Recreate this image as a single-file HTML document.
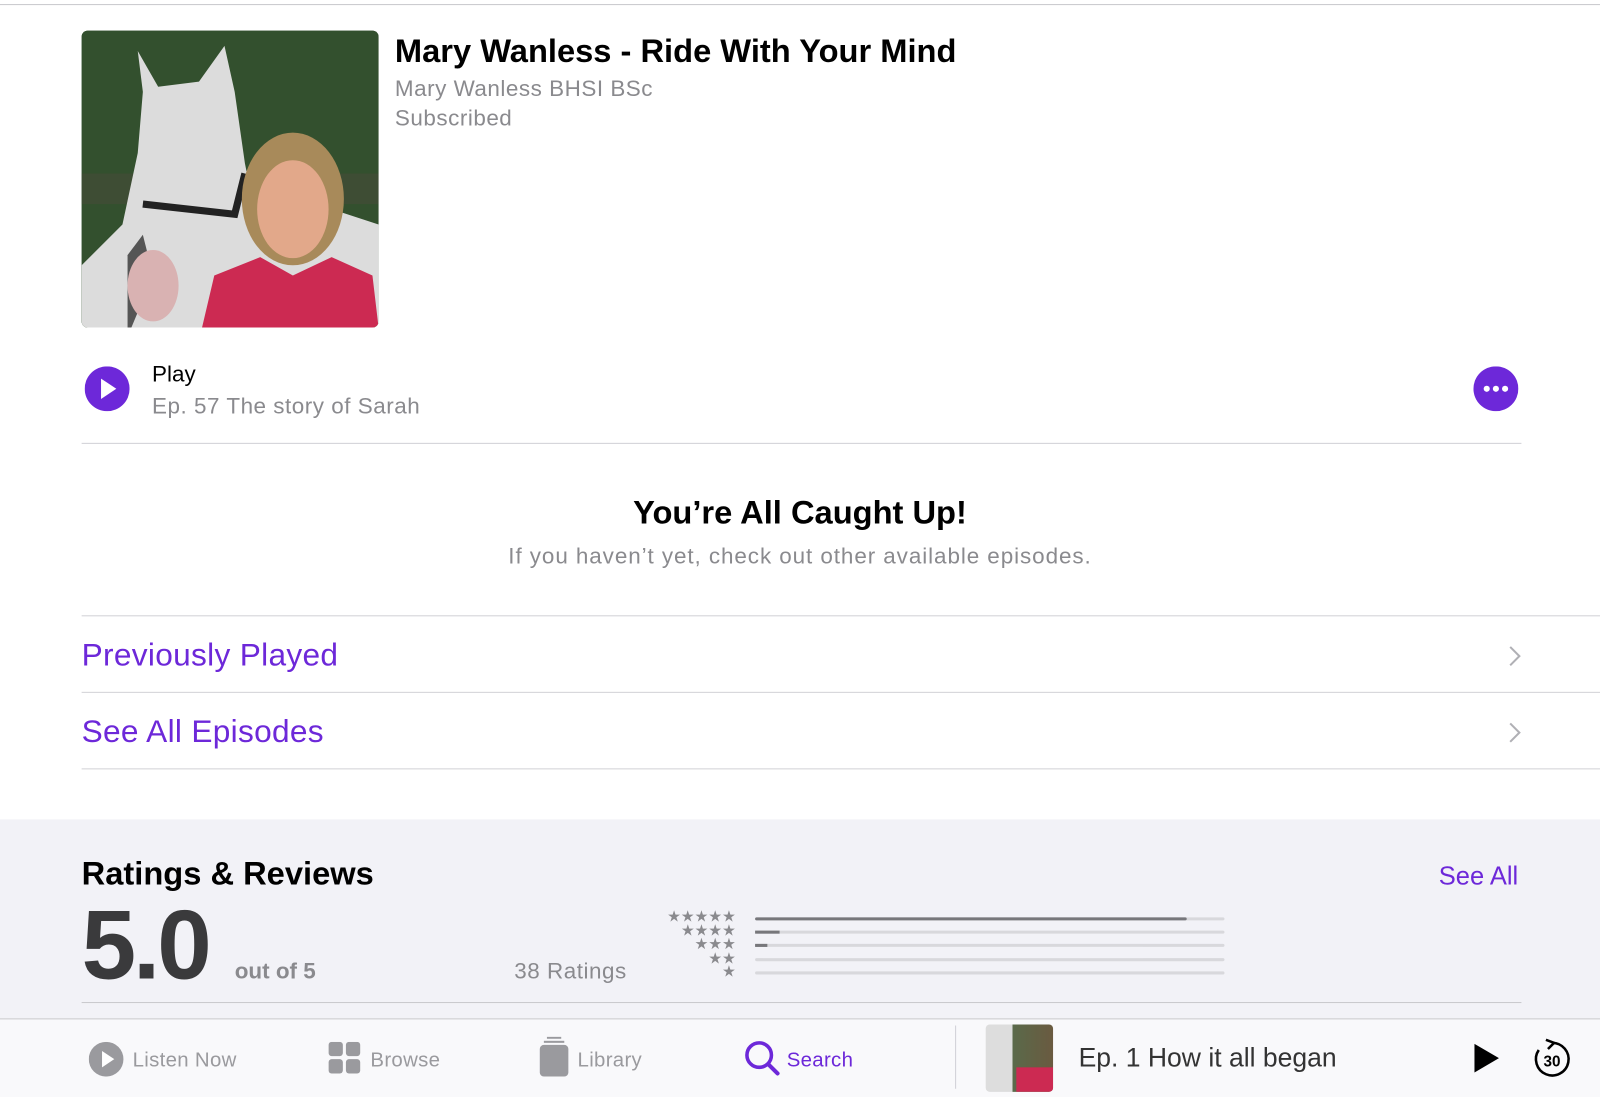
<!DOCTYPE html>
<html><head><meta charset="utf-8"><style>
*{margin:0;padding:0;box-sizing:border-box}
body{width:1600px;height:1097px;overflow:hidden;background:#fff;font-family:"Liberation Sans",sans-serif}
#w{width:1568px;height:1075px;position:relative;transform:scale(1.0204);transform-origin:0 0}
.a{position:absolute}
.g{color:#8a8a8e;letter-spacing:.5px}
.p{color:#6d28d9}
</style></head><body><div id="w">
<div class="a" style="left:0;top:4px;width:1568px;height:1px;background:#c8c8cc"></div>
<div class="a" style="left:80px;top:30px;width:291px;height:291px;border-radius:6px;overflow:hidden;background:#2e4a2a">
<svg width="291" height="291">
<rect width="291" height="291" fill="#33502e"/>
<rect x="0" y="140" width="291" height="30" fill="#4a4a3a" opacity=".5"/>
<path d="M0 291 L0 230 L40 190 L55 120 L60 60 L55 20 L75 55 L115 50 L140 15 L150 60 L160 130 L170 180 L230 170 L291 190 L291 291Z" fill="#dcdcdc"/>
<path d="M45 300 L45 220 L60 200 L70 240 Z" fill="#555"/>
<ellipse cx="70" cy="250" rx="25" ry="35" fill="#d9b2b2"/>
<path d="M60 170 L150 180 L160 140" stroke="#222" stroke-width="7" fill="none"/>
<ellipse cx="207" cy="165" rx="50" ry="65" fill="#a88a5a"/>
<ellipse cx="207" cy="175" rx="35" ry="48" fill="#e2a88a"/>
<path d="M118 291 L130 240 L175 222 L207 240 L245 222 L285 240 L291 291Z" fill="#cc2a52"/>
</svg></div>
<div class="a" style="left:387px;top:32px;font-size:32px;font-weight:bold;color:#000">Mary Wanless - Ride With Your Mind</div>
<div class="a g" style="left:387px;top:74px;font-size:22px">Mary Wanless BHSI BSc</div>
<div class="a g" style="left:387px;top:103px;font-size:22px">Subscribed</div>
<svg class="a" style="left:83px;top:359px" width="44" height="44"><circle cx="22" cy="22" r="22" fill="#6d28d9"/><path d="M16 12 L31 22 L16 32Z" fill="#fff"/></svg>
<div class="a" style="left:149px;top:354px;font-size:22px;color:#000">Play</div>
<div class="a g" style="left:149px;top:385px;font-size:22px">Ep. 57 The story of Sarah</div>
<svg class="a" style="left:1444px;top:359px" width="44" height="44"><circle cx="22" cy="22" r="22" fill="#6d28d9"/><circle cx="13" cy="22" r="3" fill="#fff"/><circle cx="22" cy="22" r="3" fill="#fff"/><circle cx="31" cy="22" r="3" fill="#fff"/></svg>
<div class="a" style="left:80px;top:434px;width:1411px;height:1px;background:#d1d1d6"></div>
<div class="a" style="left:0;width:1568px;top:484px;text-align:center;font-size:32px;font-weight:bold;color:#000">You’re All Caught Up!</div>
<div class="a g" style="left:0;width:1568px;top:532px;text-align:center;font-size:22px;letter-spacing:.9px">If you haven’t yet, check out other available episodes.</div>
<div class="a" style="left:80px;top:603px;width:1488px;height:1px;background:#d1d1d6"></div>
<div class="a p" style="left:80px;top:624px;font-size:31px;letter-spacing:.3px">Previously Played</div>
<svg class="a" style="left:1478px;top:632px" width="14" height="22"><path d="M2 2 L11 11 L2 20" stroke="#b0b0b5" stroke-width="2" fill="none"/></svg>
<div class="a" style="left:80px;top:678px;width:1488px;height:1px;background:#d1d1d6"></div>
<div class="a p" style="left:80px;top:699px;font-size:31px;letter-spacing:.3px">See All Episodes</div>
<svg class="a" style="left:1478px;top:707px" width="14" height="22"><path d="M2 2 L11 11 L2 20" stroke="#b0b0b5" stroke-width="2" fill="none"/></svg>
<div class="a" style="left:80px;top:753px;width:1488px;height:1px;background:#d1d1d6"></div>
<div class="a" style="left:0;top:803px;width:1568px;height:195px;background:#f2f2f7"></div>
<div class="a" style="left:80px;top:838px;font-size:32px;font-weight:bold;color:#000">Ratings &amp; Reviews</div>
<div class="a p" style="left:1410px;top:845px;font-size:25px">See All</div>
<div class="a" style="left:80px;top:872px;font-size:96px;font-weight:bold;color:#3a3a3c;letter-spacing:-3px">5.0</div>
<div class="a" style="left:230px;top:939px;font-size:22px;font-weight:bold;color:#8a8a8e">out of 5</div>
<div class="a g" style="left:504px;top:939px;font-size:22px">38 Ratings</div>
<div class="a" style="left:580px;top:892px;width:141px;text-align:right;font-size:15px;line-height:13.5px;color:#8a8a8e">★★★★★<br>★★★★<br>★★★<br>★★<br>★</div>
<div class="a" style="left:740px;top:899px;width:460px;height:3px;background:#d8d8dc;border-radius:2px"><div style="width:423px;height:3px;background:#77777b;border-radius:2px"></div></div>
<div class="a" style="left:740px;top:912px;width:460px;height:3px;background:#d8d8dc;border-radius:2px"><div style="width:24px;height:3px;background:#77777b"></div></div>
<div class="a" style="left:740px;top:925px;width:460px;height:3px;background:#d8d8dc;border-radius:2px"><div style="width:12px;height:3px;background:#77777b"></div></div>
<div class="a" style="left:740px;top:939px;width:460px;height:3px;background:#d8d8dc;border-radius:2px"></div>
<div class="a" style="left:740px;top:952px;width:460px;height:3px;background:#d8d8dc;border-radius:2px"></div>
<div class="a" style="left:80px;top:982px;width:1411px;height:1px;background:#c8c8cc"></div>
<div class="a" style="left:0;top:998px;width:1568px;height:77px;background:#f9f9fb;border-top:1px solid #c8c8cc"></div>
<svg class="a" style="left:87px;top:1021px" width="34" height="34"><circle cx="17" cy="17" r="17" fill="#9a9a9e"/><path d="M13 9 L25 17 L13 25Z" fill="#fff"/></svg>
<div class="a" style="left:130px;top:1028px;font-size:20px;color:#9a9a9e;letter-spacing:.3px">Listen Now</div>
<svg class="a" style="left:322px;top:1021px" width="32" height="32" fill="#9a9a9e"><rect width="14" height="14" rx="3"/><rect x="17" width="14" height="14" rx="3"/><rect y="17" width="14" height="14" rx="3"/><rect x="17" y="17" width="14" height="14" rx="3"/></svg>
<div class="a" style="left:363px;top:1028px;font-size:20px;color:#9a9a9e;letter-spacing:.3px">Browse</div>
<svg class="a" style="left:528px;top:1016px" width="30" height="40" fill="#9a9a9e"><rect x="8" y="0" width="14" height="2"/><rect x="5" y="4" width="20" height="2"/><rect x="1" y="8" width="28" height="31" rx="4"/></svg>
<div class="a" style="left:566px;top:1028px;font-size:20px;color:#9a9a9e;letter-spacing:.3px">Library</div>
<svg class="a" style="left:729px;top:1019px" width="36" height="36"><circle cx="15" cy="15" r="12" stroke="#6d28d9" stroke-width="3.5" fill="none"/><path d="M24 24 L33 33" stroke="#6d28d9" stroke-width="4" stroke-linecap="round"/></svg>
<div class="a p" style="left:771px;top:1028px;font-size:20px;letter-spacing:.3px">Search</div>
<div class="a" style="left:936px;top:1005px;width:1px;height:62px;background:#d1d1d6"></div>
<div class="a" style="left:966px;top:1004px;width:66px;height:66px;border-radius:4px;background:linear-gradient(90deg,#ddd 0,#ddd 40%,#5a6a4a 40%,#6a5a40 100%);overflow:hidden"><div style="position:absolute;left:30px;top:42px;width:36px;height:24px;background:#cc2a52"></div></div>
<div class="a" style="left:1057px;top:1021px;font-size:26px;color:#333">Ep. 1 How it all began</div>
<svg class="a" style="left:1443px;top:1021px" width="28" height="32"><path d="M2 2 L26 16 L2 30Z" fill="#000"/></svg>
<svg class="a" style="left:1502px;top:1017px" width="38" height="40"><path d="M19 5 A16 16 0 1 1 6 12" stroke="#000" stroke-width="2.5" fill="none"/><path d="M13 2 L21 5 L15 11" stroke="#000" stroke-width="2.5" fill="none"/><text x="19" y="28" text-anchor="middle" font-size="15" font-family="Liberation Sans" font-weight="bold">30</text></svg>
</div></body></html>
